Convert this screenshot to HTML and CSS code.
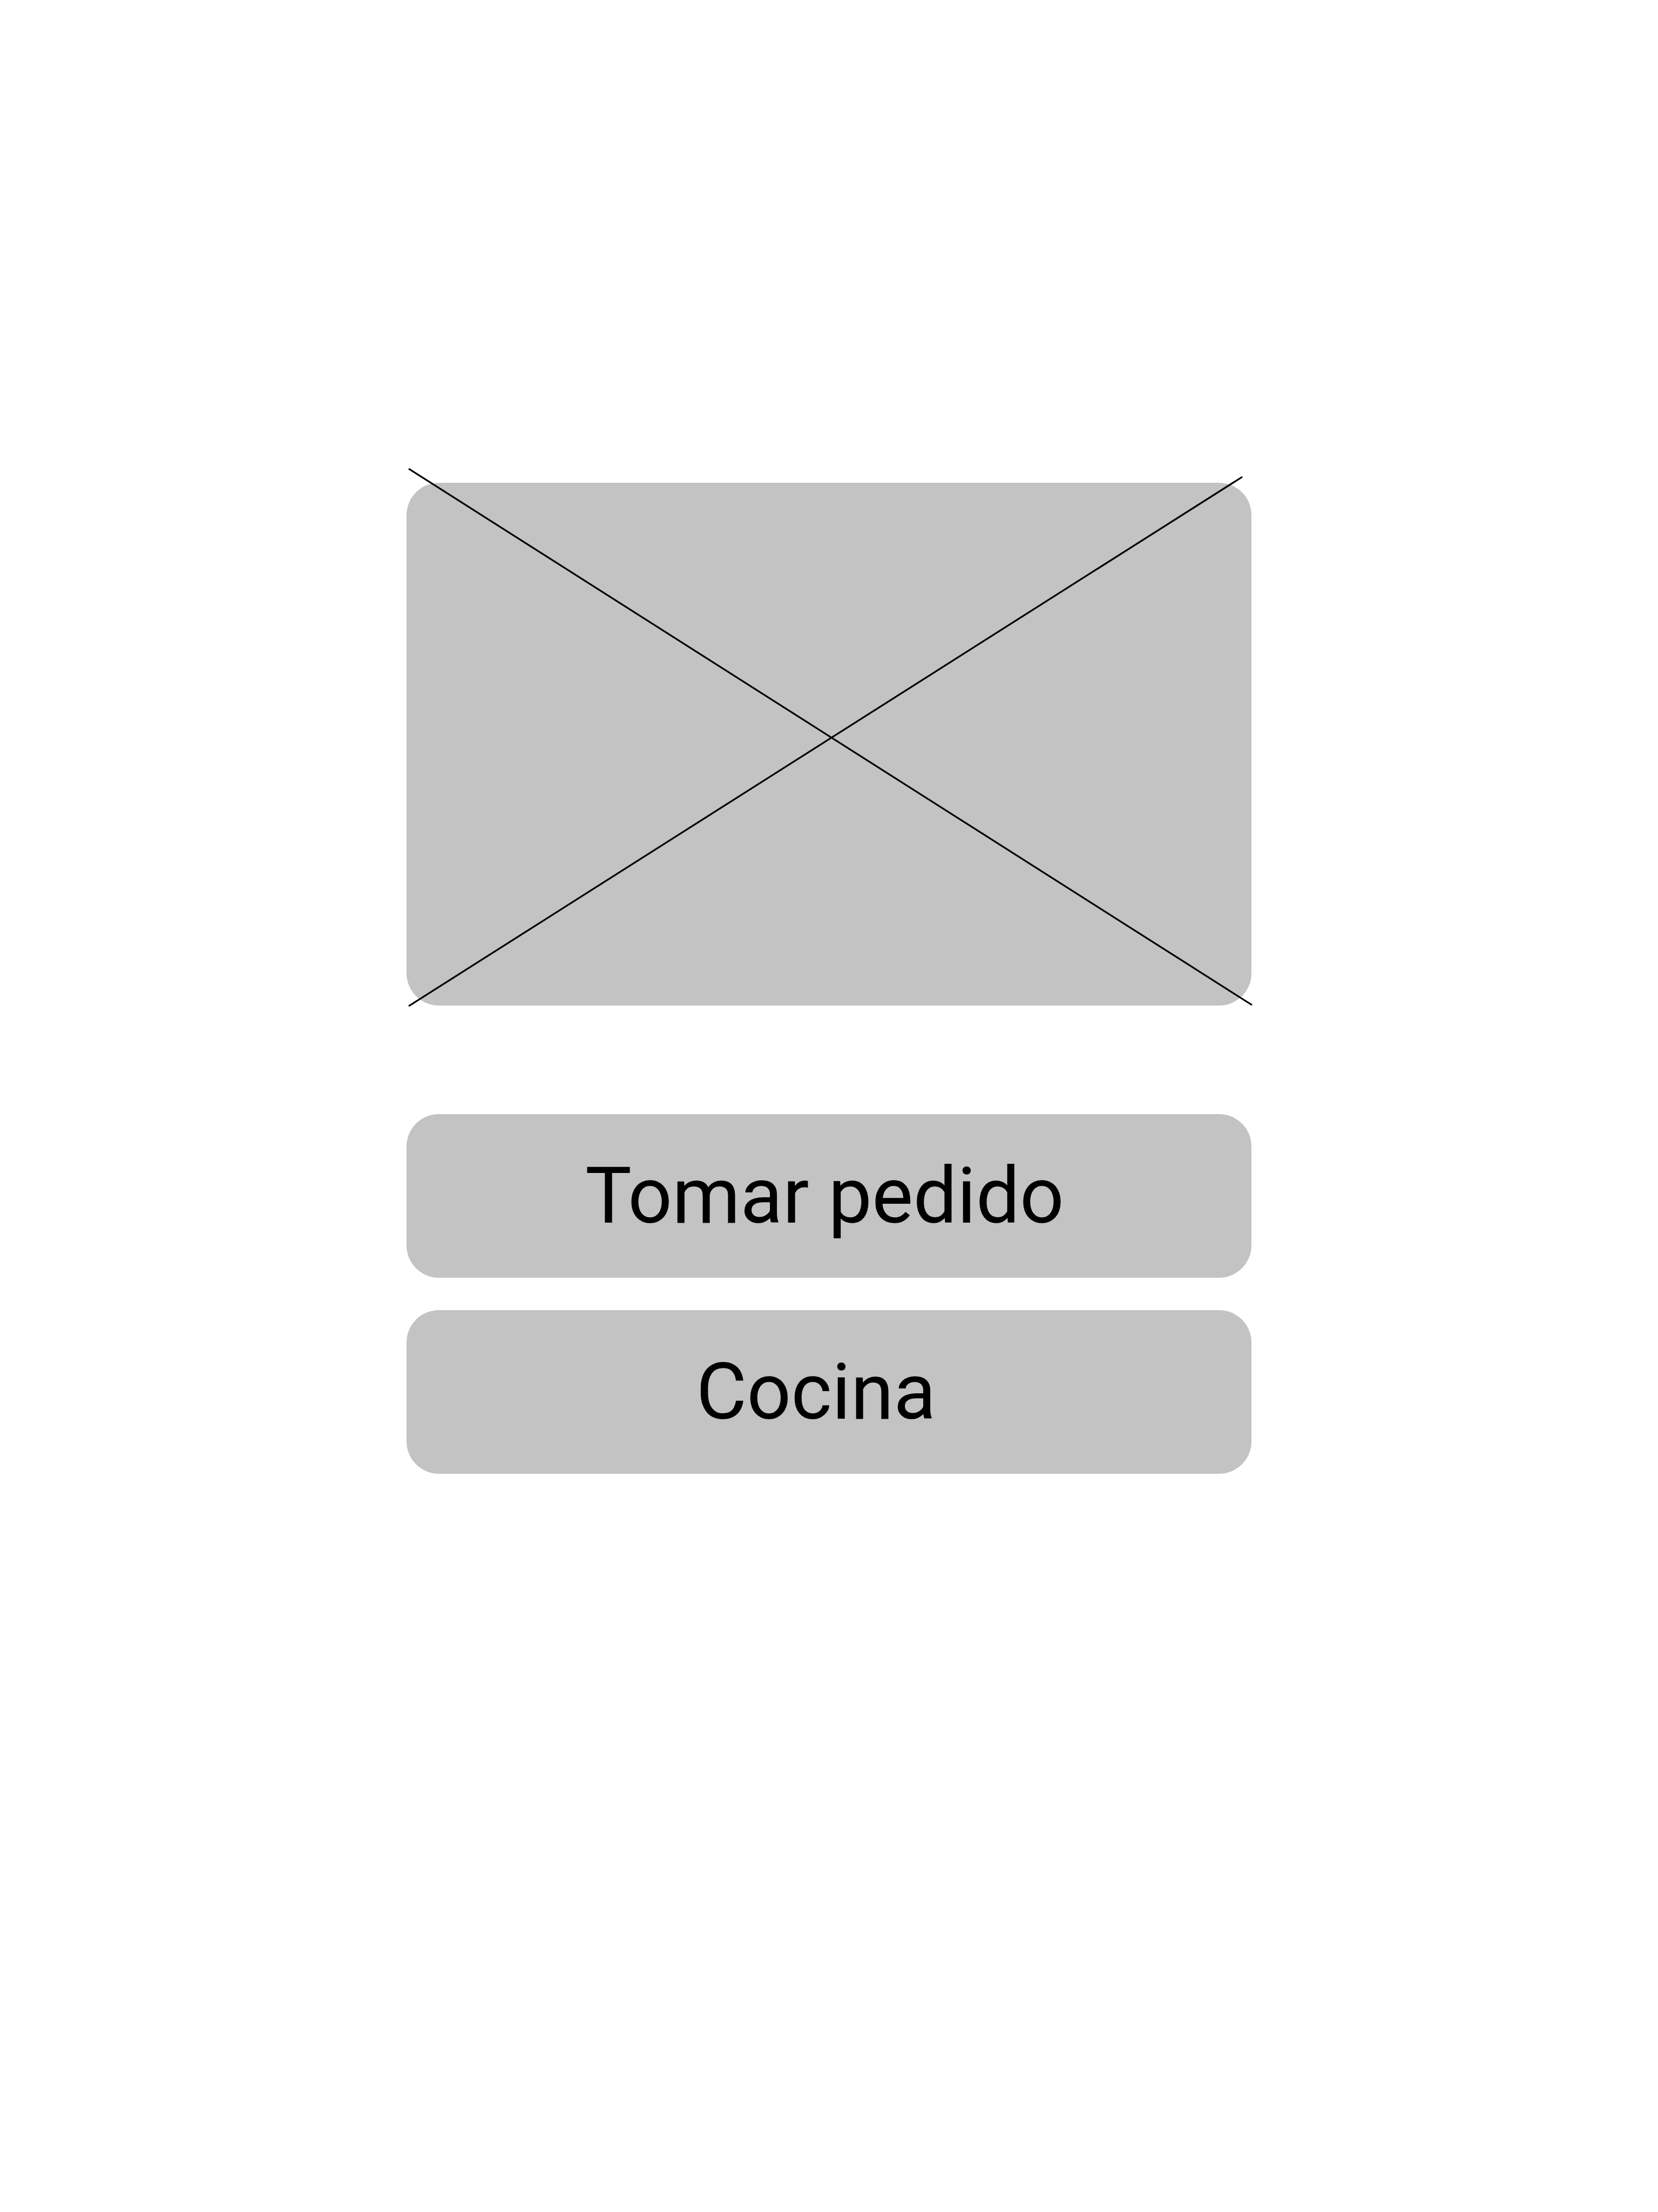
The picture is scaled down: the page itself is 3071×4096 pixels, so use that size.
FILE: index.html
```html
<!DOCTYPE html>
<html lang="es">
<head>
<meta charset="utf-8">
<meta name="viewport" content="width=device-width, initial-scale=1">
<title>Inicio</title>
<link rel="stylesheet" href="styles.css">
</head>
<body>
<main class="home">
  <div class="content">
    <svg class="placeholder" viewBox="0 0 1565 968" aria-hidden="true">
      <rect width="1565" height="968" rx="60" fill="#c3c3c3"/>
      <path d="M4 -26L1566 967M4 969L1548 -11" fill="none" stroke="#000" stroke-width="3.2"/>
    </svg>
    <nav class="actions">
      <button class="action" type="button">Tomar pedido</button>
      <button class="action action-short" type="button">Cocina</button>
    </nav>
  </div>
</main>
</body>
</html>
```

FILE: styles.css
```css
* {
  box-sizing: border-box;
}

body {
  margin: 0;
  background: #fff;
  font-family: Roboto, sans-serif;
}

.home {
  display: flex;
  justify-content: center;
  min-height: 100vh;
  padding-top: 894px;
}

.content {
  display: flex;
  flex-direction: column;
  gap: 201px;
  width: 51%;
  max-width: 1565px;
}

.placeholder {
  display: block;
  width: 100%;
  overflow: visible;
}

.actions {
  display: flex;
  flex-direction: column;
  gap: 60px;
}

.action {
  padding: 67px 16px 67px 0;
  border: 0;
  border-radius: 60px;
  background: #c3c3c3;
  color: #000;
  font-family: inherit;
  font-size: 144px;
  line-height: 169px;
  text-align: center;
  cursor: pointer;
}

.action-short {
  padding-right: 48px;
}
```
